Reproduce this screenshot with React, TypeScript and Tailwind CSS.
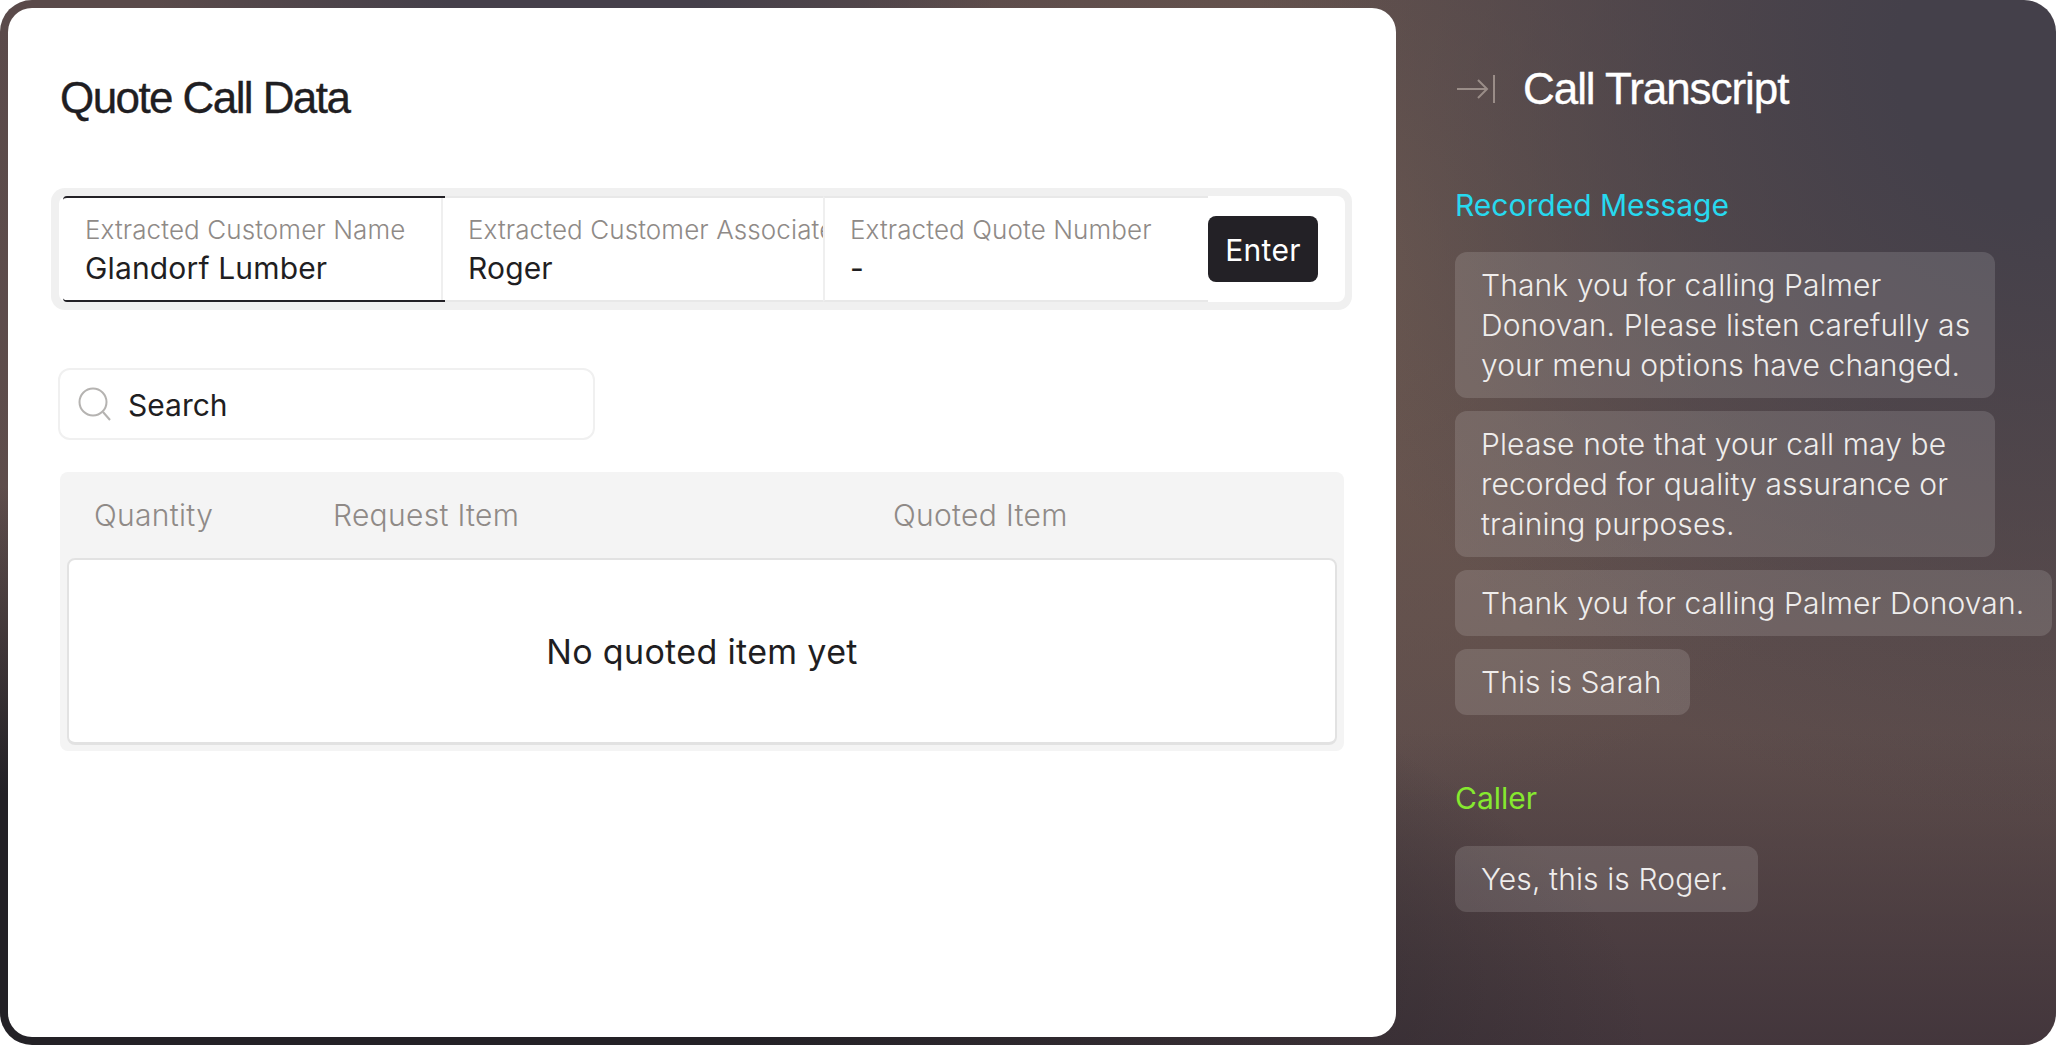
import React from "react";

const inter = "font-['Inter',sans-serif]";
const heading = "font-['Liberation_Sans',sans-serif] [-webkit-text-stroke:0.35px_currentColor]";

function Field({ label, value, active, width }: { label: string; value: string; active?: boolean; width: string }) {
  return (
    <div
      className={`${width} shrink-0 h-full overflow-hidden whitespace-nowrap border-y-2 flex flex-col justify-center ${
        active ? "border-[#232126] rounded-l-[4px] relative z-10" : "border-[#e8e8e8] border-l-2 border-l-[#efefef]"
      }`}
    >
      <div className="text-[26px] leading-[38px] tracking-[0.004em] font-light text-[#8f8a87]">{label}</div>
      <div className="text-[30px] leading-[38px] tracking-[0.005em] text-[#1f1e22]">{value}</div>
    </div>
  );
}

function Bubble({ children, width }: { children: React.ReactNode; width: string }) {
  return (
    <div className={`${width} shrink-0 rounded-[12px] bg-white/[0.13] pl-[26px] py-[13px] text-[30px] leading-[40px] tracking-[0.004em] font-light text-[#efedec]`}>
      {children}
    </div>
  );
}

export default function App() {
  return (
    <div className={`${inter} w-[2056px] h-[1046px] bg-white overflow-hidden`}>
      <div className="w-full h-[1045px] rounded-[32px] p-2 pr-0 flex overflow-hidden bg-[radial-gradient(800px_760px_at_2056px_60px,#44404a_0%,#44404a_20%,rgba(68,64,74,0)_100%),radial-gradient(420px_120px_at_575px_0px,#45404a_0%,#45404a_30%,rgba(69,64,74,0)_100%),radial-gradient(1650px_560px_at_0px_1046px,#232126_0%,#232126_45%,rgba(35,33,38,0)_100%),linear-gradient(180deg,rgba(63,50,56,0)_70%,#43363c_100%),radial-gradient(560px_560px_at_1360px_260px,#6d5950_0%,rgba(109,89,80,0)_100%),linear-gradient(180deg,#5a4a4a_0%,#5f4e4c_60%,#5a4a49_100%)]">
        <main className="w-[1388px] h-[1029px] shrink-0 rounded-[24px] bg-white pl-[52px] pr-[44px] pt-[66px] overflow-hidden">
          <h1 className={`${heading} text-[44px] leading-[48px] tracking-[-0.036em] text-[#1f1e22]`}>Quote Call Data</h1>

          <div className="mt-[66px] -ml-[9px] w-[1301px] h-[122px] rounded-[14px] bg-[#f0f0f0] p-[8px] pr-[7px]">
            <div className="h-full rounded-[8px] bg-white flex items-center">
              <Field active width="w-[382px] ml-[4px] pl-[22px]" label="Extracted Customer Name" value="Glandorf Lumber" />
              <Field width="w-[382px] -ml-[4px] pl-[25px]" label="Extracted Customer Associate" value="Roger" />
              <Field width="w-[385px] pl-[25px]" label="Extracted Quote Number" value="-" />
              <button className="w-[110px] h-[66px] shrink-0 rounded-[8px] bg-[#232126] text-white text-[30px] tracking-[0.01em] leading-[68px]">Enter</button>
            </div>
          </div>

          <div className="mt-[58px] -ml-[2px] w-[537px] h-[72px] rounded-[12px] border-2 border-[#f0f0f0] flex items-center pl-[18px] gap-[17px]">
            <svg width="33" height="34" viewBox="0 0 33 34" fill="none" stroke="#b5b3b1" strokeWidth="2">
              <circle cx="15" cy="15" r="13.5" />
              <path d="M25 25l7 8" />
            </svg>
            <span className="text-[30px] leading-[36px] pt-[2px] text-[#1f1e22]">Search</span>
          </div>

          <div className="mt-[32px] w-[1284px] h-[279px] rounded-[8px] bg-[#f4f4f4] px-[7px] pb-[6px] flex flex-col">
            <div className="h-[86px] flex items-center text-[30px] tracking-[0.01em] font-light text-[#8f8a87] shrink-0">
              <div className="w-[266px] pl-[27px]">Quantity</div>
              <div className="w-[560px]">Request Item</div>
              <div>Quoted Item</div>
            </div>
            <div className="flex-1 rounded-[8px] bg-white border-2 border-b-[3px] border-[#e2e2e2] flex items-center justify-center text-[34px] tracking-[0.01em] text-[#1f1e22]">
              No quoted item yet
            </div>
          </div>
        </main>

        <aside className="flex-1 min-w-0 pl-[59px] pt-[60px]">
          <div className="flex items-center h-[42px] gap-[28px] pl-[2px]">
            <svg width="38" height="28" viewBox="0 0 38 28" fill="none" stroke="#9a8d88" strokeWidth="2">
              <path d="M0 14h30M21 5l9 9-9 9" />
              <path d="M37 0v28" />
            </svg>
            <h2 className={`${heading} text-[44px] leading-[42px] tracking-[-0.024em] text-white`}>Call Transcript</h2>
          </div>

          <div className="mt-[75px] text-[30px] leading-[40px] text-[#27d9ef]">Recorded Message</div>
          <div className="mt-[27px] flex flex-col gap-[13px] items-start">
            <Bubble width="w-[540px] pr-[20px]">Thank you for calling Palmer Donovan. Please listen carefully as your menu options have changed.</Bubble>
            <Bubble width="w-[540px] pr-[20px]">Please note that your call may be recorded for quality assurance or training purposes.</Bubble>
            <Bubble width="w-fit whitespace-nowrap pr-[28px]">Thank you for calling Palmer Donovan.</Bubble>
            <Bubble width="w-fit whitespace-nowrap pr-[28px]">This is Sarah</Bubble>
          </div>

          <div className="mt-[63px] text-[30px] leading-[40px] text-[#86e92f]">Caller</div>
          <div className="mt-[28px] flex flex-col items-start">
            <Bubble width="w-fit whitespace-nowrap pr-[30px]">Yes, this is Roger.</Bubble>
          </div>
        </aside>
      </div>
    </div>
  );
}
